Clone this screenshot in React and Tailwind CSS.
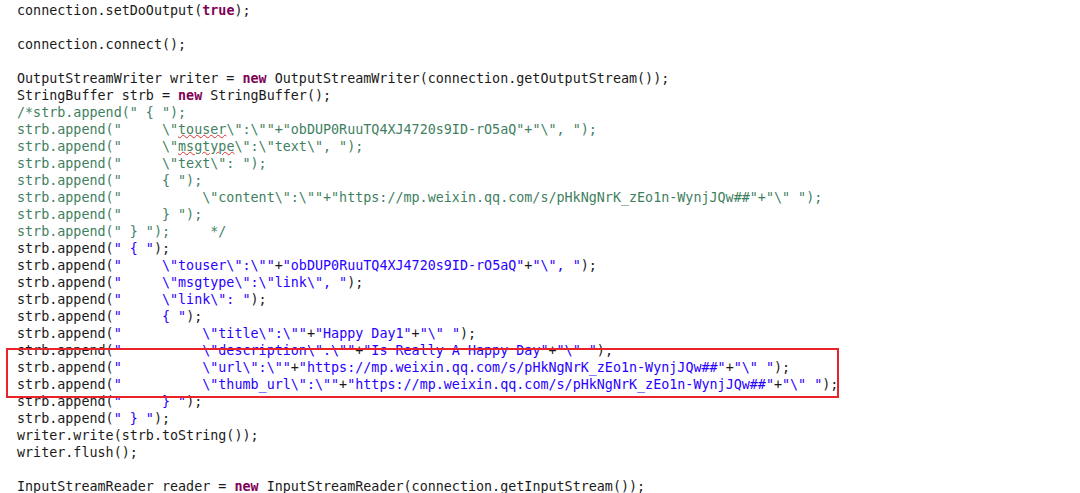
import React from "react";

// segment kinds: d = default, k = keyword, s = string, c = comment, w = comment with spell-check squiggle
const colors = {
  d: "text-[#1a1a1a]",
  k: "text-[#7f0055] font-bold",
  s: "text-[#2a00ff]",
  c: "text-[#3f7f5f]",
  w: "text-[#3f7f5f] underline decoration-wavy decoration-[#e03030] decoration-[1px] underline-offset-[0px]",
};

const URL = "https://mp.weixin.qq.com/s/pHkNgNrK_zEo1n-WynjJQw##";
const ID = "obDUP0RuuTQ4XJ4720s9ID-rO5aQ";

const lines = [
  [["d", "connection.setDoOutput("], ["k", "true"], ["d", ");"]],
  [],
  [["d", "connection.connect();"]],
  [],
  [["d", "OutputStreamWriter writer = "], ["k", "new"], ["d", " OutputStreamWriter(connection.getOutputStream());"]],
  [["d", "StringBuffer strb = "], ["k", "new"], ["d", " StringBuffer();"]],
  [["c", '/*strb.append(" { ");']],
  [["c", 'strb.append("     \\"'], ["w", "touser"], ["c", '\\":\\""+"' + ID + '"+"\\", ");']],
  [["c", 'strb.append("     \\"'], ["w", "msgtype"], ["c", '\\":\\"text\\", ");']],
  [["c", 'strb.append("     \\"text\\": ");']],
  [["c", 'strb.append("     { ");']],
  [["c", 'strb.append("          \\"content\\":\\""+"' + URL + '"+"\\" ");']],
  [["c", 'strb.append("     } ");']],
  [["c", 'strb.append(" } ");     */']],
  [["d", "strb.append("], ["s", '" { "'], ["d", ");"]],
  [["d", "strb.append("], ["s", '"     \\"touser\\":\\""'], ["d", "+"], ["s", '"' + ID + '"'], ["d", "+"], ["s", '"\\", "'], ["d", ");"]],
  [["d", "strb.append("], ["s", '"     \\"msgtype\\":\\"link\\", "'], ["d", ");"]],
  [["d", "strb.append("], ["s", '"     \\"link\\": "'], ["d", ");"]],
  [["d", "strb.append("], ["s", '"     { "'], ["d", ");"]],
  [["d", "strb.append("], ["s", '"          \\"title\\":\\""'], ["d", "+"], ["s", '"Happy Day1"'], ["d", "+"], ["s", '"\\" "'], ["d", ");"]],
  [["d", "strb.append("], ["s", '"          \\"description\\":\\""'], ["d", "+"], ["s", '"Is Really A Happy Day"'], ["d", "+"], ["s", '"\\" "'], ["d", ");"]],
  [["d", "strb.append("], ["s", '"          \\"url\\":\\""'], ["d", "+"], ["s", '"' + URL + '"'], ["d", "+"], ["s", '"\\" "'], ["d", ");"]],
  [["d", "strb.append("], ["s", '"          \\"thumb_url\\":\\""'], ["d", "+"], ["s", '"' + URL + '"'], ["d", "+"], ["s", '"\\" "'], ["d", ");"]],
  [["d", "strb.append("], ["s", '"     } "'], ["d", ");"]],
  [["d", "strb.append("], ["s", '" } "'], ["d", ");"]],
  [["d", "writer.write(strb.toString());"]],
  [["d", "writer.flush();"]],
  [],
  [["d", "InputStreamReader reader = "], ["k", "new"], ["d", " InputStreamReader(connection.getInputStream());"]],
];

export default function App() {
  return (
    <div className="relative w-[1080px] h-[493px] bg-white overflow-hidden">
      <div className="flex flex-col pt-[2px] pl-[17px] font-['DejaVu_Sans_Mono',monospace] text-[13.38px] leading-[17px]">
        {lines.map((segs, i) => (
          <div key={i} className="h-[17px] whitespace-pre">
            {segs.map(([kind, text], j) => (
              <span key={j} className={colors[kind]}>
                {text}
              </span>
            ))}
          </div>
        ))}
      </div>

      {/* red highlight box drawn over the code */}
      <div className="absolute left-[6px] top-[348px] w-[833px] h-[50px] border-2 border-[#e8242a]" />
    </div>
  );
}
